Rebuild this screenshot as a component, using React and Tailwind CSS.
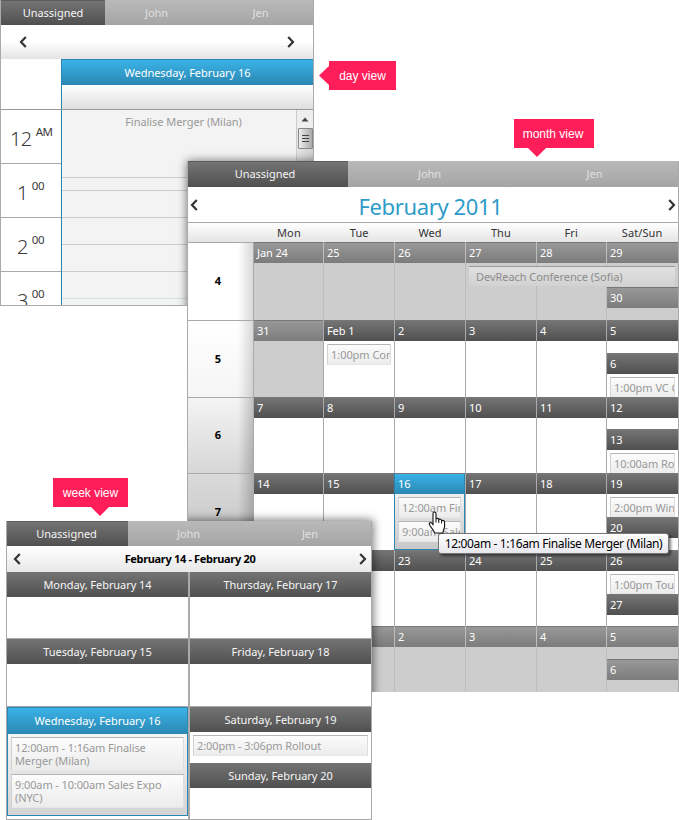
import React from "react";
import clsx from "clsx";

const DARK = "bg-linear-to-b from-[#747474] to-[#505050]";
const MUTED = "bg-linear-to-b from-[#989898] to-[#7c7c7c]";
const TODAY = "bg-linear-to-b from-[#3ab3e8] to-[#2b87b2]";
const TABS = "bg-linear-to-b from-[#b9b9b9] to-[#a5a5a5]";

function Chevron({ left }) {
  return (
    <svg width="8" height="12" viewBox="0 0 8 12" className="shrink-0">
      <path d={left ? "M6.8 0.9 L2 6 L6.8 11.1" : "M1.2 0.9 L6 6 L1.2 11.1"} fill="none" stroke="#333" strokeWidth="2.2" />
    </svg>
  );
}

function Tabs({ height, first, second }) {
  return (
    <div className={clsx("flex shrink-0 text-[11px] tracking-[-0.02px]", height, TABS)}>
      <div className={clsx("flex items-center justify-center border-t border-[#5c5c5c] text-[#f4f4f4]", first, DARK)}>Unassigned</div>
      <div className={clsx("flex items-center justify-center pt-[1px] text-[#e0e0e0]", second)}>John</div>
      <div className="flex flex-1 items-center justify-center pt-[1px] text-[#e0e0e0]">Jen</div>
    </div>
  );
}

function Event({ children, className }) {
  return (
    <div className={clsx("shrink-0 overflow-hidden border border-t-[#b5b5b5] border-r-[#dedede] border-b-[#e6e6e6] border-l-[#d2d2d2] bg-linear-to-b from-[#fcfcfc] to-[#ececec] text-[11px] text-[#999]", className)}>
      {children}
    </div>
  );
}

function Hour({ n, suffix, pad }) {
  return (
    <div className={clsx("flex h-[54px] shrink-0 border-b border-[#aaa] text-[#3c3c3c]", pad)}>
      <span className="mt-[15px] text-[20px] leading-[28px] font-light tracking-[-0.6px]">{n}</span>
      <span className="mt-[14px] ml-[4px] text-[11.5px] leading-[16px] tracking-[-0.4px]">{suffix}</span>
    </div>
  );
}

function DayView() {
  return (
    <div className="absolute top-0 left-0 flex h-[306px] w-[314px] flex-col overflow-hidden border-x border-b border-[#aaa] bg-white">
      <Tabs height="h-[25px]" first="w-[104px]" second="w-[103px]" />
      <div className="flex h-[34px] shrink-0 items-center justify-between bg-linear-to-b from-white from-50% to-[#e4e4e4] pr-[18px] pl-[18px]">
        <Chevron left />
        <Chevron />
      </div>
      <div className="flex h-[51px] shrink-0 border-b border-[#999]">
        <div className="w-[60px]" />
        <div className="flex flex-1 flex-col border-l border-[#2b87b2]">
          <div className={clsx("flex h-[26px] items-center justify-center border-t border-[#2b87b2] pt-[1px] text-[11px] tracking-[-0.05px] text-white", TODAY)}>
            Wednesday, February 16
          </div>
          <div className="flex-1 bg-linear-to-b from-white to-[#dedede]" />
        </div>
      </div>
      <div className="flex min-h-0 flex-1">
        <div className="flex w-[60px] flex-col overflow-hidden">
          <Hour n="12" suffix="AM" pad="pl-[9px]" />
          <Hour n="1" suffix="00" pad="pl-[16px]" />
          <Hour n="2" suffix="00" pad="pl-[16px]" />
          <Hour n="3" suffix="00" pad="pl-[16px]" />
        </div>
        <div className="flex flex-1 flex-col overflow-hidden border-l border-[#2b87b2] bg-[#f3f3f3]">
          <div className="h-[68px] shrink-0 border-b border-[#ccc] pt-[4px] pl-[9px] text-center text-[11px] tracking-[-0.05px] text-[#999]">Finalise Merger (Milan)</div>
          <div className="h-[13px] shrink-0 border-b border-[#ccc]" />
          <div className="h-[27px] shrink-0 border-b border-[#ccc]" />
          <div className="h-[27px] shrink-0 border-b border-[#ccc]" />
          <div className="h-[27px] shrink-0 border-b border-[#ccc]" />
          <div className="h-[27px] shrink-0 border-b border-[#d5e2e2]" />
        </div>
        <div className="flex w-[17px] flex-col items-center border-l border-[#ccc] bg-linear-to-r from-[#e6e6e6] to-[#cfcfcf]">
          <div className="flex h-[18px] w-full items-center justify-center bg-[#eee]">
            <svg width="8" height="5" viewBox="0 0 8 5"><path d="M4 0.5 L7.5 4.5 H0.5 Z" fill="#444" /></svg>
          </div>
          <div className="flex h-[21px] w-[15px] flex-col items-center justify-center gap-[2px] rounded-[1px] border border-[#888] bg-linear-to-r from-[#eee] to-[#aaa]">
            <div className="h-px w-[7px] bg-[#444]" />
            <div className="h-px w-[7px] bg-[#444]" />
            <div className="h-px w-[7px] bg-[#444]" />
          </div>
        </div>
      </div>
      <div className="absolute top-[162px] left-[187px] h-[200px] w-[200px] shadow-[0_0_9px_1px_rgba(0,0,0,0.55)]" />
    </div>
  );
}

const COLS = ["w-[70px]", "w-[71px]", "w-[71px]", "w-[71px]", "w-[70px]", "w-[72px]"];

const WEEKS = [
  { no: 4, h: "h-[78px]", days: ["Jan 24", "25", "26", "27", "28", "29"], out: [0, 1, 2, 3, 4, 5], sun: "30", gap: "h-[24px]", bg: "bg-white", edge: "to-black/15" },
  { no: 5, h: "h-[77px]", days: ["31", "Feb 1", "2", "3", "4", "5"], out: [0], sun: "6", gap: "h-[12px]", tue: "1:00pm Con", sunEv: "1:00pm VC C", bg: "bg-linear-to-b from-white to-[#f5f5f5]", edge: "to-black/15" },
  { no: 6, h: "h-[76px]", days: ["7", "8", "9", "10", "11", "12"], out: [], sun: "13", gap: "h-[11px]", sunEv: "10:00am Ro", bg: "bg-linear-to-b from-[#f4f4f4] to-[#d6d6d6]", edge: "to-black/20" },
  { no: 7, h: "h-[77px]", days: ["14", "15", "16", "17", "18", "19"], out: [], sun: "20", gap: "h-[23px]", satEv: "2:00pm Win", bg: "bg-linear-to-b from-[#dadada] to-[#c4c4c4]", edge: "to-black/20" },
  { no: 8, h: "h-[76px]", days: ["21", "22", "23", "24", "25", "26"], out: [], sun: "27", gap: "h-[23px]", satEv: "1:00pm Tou", bg: "bg-[#c4c4c4]", edge: "to-black/20" },
  { no: 9, h: "h-[66px]", days: ["28", "1", "2", "3", "4", "5"], out: [0, 1, 2, 3, 4, 5], sun: "6", gap: "h-[12px]", bg: "bg-[#c4c4c4]", edge: "to-black/20" },
];

function DayHeader({ children, tone }) {
  return (
    <div className={clsx("h-[21px] shrink-0 border-t border-[#777] pl-[3px] text-[11px] leading-[20px] tracking-[-0.1px] text-white", tone)}>{children}</div>
  );
}

const EV = "mx-[3px] mt-[3px] h-[21px] pl-[3px] leading-[20px] whitespace-nowrap tracking-[-0.05px]";

function Cell({ week, i }) {
  const out = week.out.includes(i);
  const today = week.no === 7 && i === 2;
  const tone = out ? MUTED : today ? TODAY : DARK;
  return (
    <div className={clsx("flex shrink-0 flex-col overflow-hidden border-l", COLS[i], today ? "border-r border-b border-[#2b87b2]" : out && i > 0 ? "border-[#bebebe]" : "border-[#aaa]", out ? "bg-[#cdcdcd]" : today ? "bg-linear-to-b from-white to-[#c8c8c8]" : "bg-white")}>
      <DayHeader tone={tone}>{week.days[i]}</DayHeader>
      {i === 1 && week.tue && <Event className={EV}>{week.tue}</Event>}
      {today && <Event className={EV}>12:00am Fin</Event>}
      {today && <Event className={EV}>9:00am Sale</Event>}
      {i === 5 && (
        <>
          <div className={clsx("flex shrink-0 flex-col pt-[3px]", week.gap)}>
            {week.satEv && <Event className="mx-[3px] h-[20px] pl-[3px] leading-[20px] tracking-[-0.05px] whitespace-nowrap">{week.satEv}</Event>}
          </div>
          <DayHeader tone={tone}>{week.sun}</DayHeader>
          {week.sunEv && <Event className={EV}>{week.sunEv}</Event>}
        </>
      )}
    </div>
  );
}

function MonthView() {
  return (
    <div className="absolute top-[161px] left-[187px] flex h-[531px] w-[492px] flex-col overflow-hidden border-x border-[#aaa] bg-white">
      <Tabs height="h-[26px]" first="w-[160px] pr-[6px]" second="w-[163px]" />
      <div className="flex h-[35px] shrink-0 items-center justify-between pr-[2px] pl-[2px]">
        <Chevron left />
        <span className="mt-[3px] -ml-[5px] text-[22px] leading-[30px] tracking-[-0.36px] text-[#2d9bc8]">February 2011</span>
        <Chevron />
      </div>
      <div className="flex h-[20px] shrink-0 border-t border-[#aaa] bg-linear-to-b from-white to-[#e4e4e4] pl-[66px] text-center text-[11px] leading-[20px] tracking-[0.1px] text-[#333]">
        {["Mon", "Tue", "Wed", "Thu", "Fri", "Sat/Sun"].map((d, i) => (
          <div key={d} className={COLS[i]}>{d}</div>
        ))}
      </div>
      {WEEKS.map((w) => (
        <div key={w.no} className={clsx("flex shrink-0", w.h)}>
          <div className={clsx("flex w-[65px] shrink-0 border-t border-[#aaa]", w.bg)}>
            <div className="flex w-[50px] items-center justify-center pl-[10px] text-[11px] font-bold text-black">{w.no}</div>
            <div className={clsx("flex-1 bg-linear-to-r from-transparent", w.edge)} />
          </div>
          {w.days.map((d, i) => <Cell key={i} week={w} i={i} />)}
        </div>
      ))}
      <div className="absolute top-[105px] left-[281px] h-[20px] w-[206px] border-t border-[#999] bg-linear-to-b from-[#e0e0e0] to-[#d2d2d2] pl-[7px] text-[11px] leading-[20px] tracking-[-0.05px] text-[#8c8c8c]">
        DevReach Conference (Sofia)
      </div>
      <div className="absolute top-[360px] -left-[182px] h-[300px] w-[366px] shadow-[0_0_9px_1px_rgba(0,0,0,0.55)]" />
    </div>
  );
}

function WeekDay({ title, h, children }) {
  return (
    <div className={clsx("shrink-0", h)}>
      <div className={clsx("flex h-[25px] items-center justify-center pt-[1px] text-[11px] tracking-[-0.05px] text-[#f6f6f6]", DARK)}>{title}</div>
      {children}
    </div>
  );
}

function WeekView() {
  return (
    <div className="absolute top-[521px] left-[6px] flex h-[299px] w-[366px] flex-col border-x border-b border-[#aaa] bg-white">
      <Tabs height="h-[25px]" first="w-[121px] pr-[2px]" second="w-[121px]" />
      <div className="flex h-[26px] shrink-0 items-center justify-between bg-linear-to-b from-white to-[#e8e8e8] pr-[4px] pl-[6px]">
        <Chevron left />
        <span className="text-[11px] font-bold tracking-[-0.33px] text-black">February 14 - February 20</span>
        <Chevron />
      </div>
      <div className="flex flex-1">
        <div className="flex w-[181px] flex-col">
          <WeekDay title="Monday, February 14" h="h-[67px] border-b border-[#aaa]" />
          <WeekDay title="Tuesday, February 15" h="h-[68px] border-b border-[#aaa]" />
          <div className="flex h-[109px] flex-col border border-[#2b87b2] bg-linear-to-b from-white to-[#d4d4d4]">
            <div className={clsx("flex h-[26px] shrink-0 items-center justify-center text-[11px] tracking-[-0.05px] text-white", TODAY)}>Wednesday, February 16</div>
            <Event className="mx-[3px] mt-[3px] h-[34px] pt-[3px] pl-[3px] leading-[13px] tracking-[-0.12px]">12:00am - 1:16am Finalise Merger (Milan)</Event>
            <Event className="mx-[3px] mt-[3px] h-[34px] pt-[3px] pl-[3px] leading-[13px] tracking-[-0.12px]">9:00am - 10:00am Sales Expo (NYC)</Event>
          </div>
        </div>
        <div className="w-[2px] bg-[#aaa]" />
        <div className="flex flex-1 flex-col">
          <WeekDay title="Thursday, February 17" h="h-[67px] border-b border-[#aaa]" />
          <WeekDay title="Friday, February 18" h="h-[68px] border-b border-[#aaa]" />
          <WeekDay title="Saturday, February 19" h="h-[56px]">
            <Event className="mx-[3px] mt-[3px] h-[21px] pl-[3px] leading-[20px] tracking-[-0.1px]">2:00pm - 3:06pm Rollout</Event>
          </WeekDay>
          <WeekDay title="Sunday, February 20" h="h-[56px]" />
        </div>
      </div>
    </div>
  );
}

function Tag({ children, box, arrow, path, w, h }) {
  return (
    <div className={clsx("absolute flex h-[29px] items-center justify-center bg-[#ff1e5a] font-['Liberation_Sans',Arial,sans-serif] text-[12px] text-white", box)}>
      {children}
      <svg className={clsx("absolute", arrow)} width={w} height={h}><path d={path} fill="#ff1e5a" /></svg>
    </div>
  );
}

export default function App() {
  return (
    <div className="relative h-[820px] w-[679px] overflow-hidden bg-white font-['Noto_Sans','Open_Sans',sans-serif]">
      <DayView />
      <MonthView />
      <WeekView />
      <Tag box="left-[329px] top-[61px] w-[67px]" arrow="-left-[10px] top-[5px]" w="10" h="19" path="M10 0 L0 9.5 L10 19 Z">day view</Tag>
      <Tag box="left-[514px] top-[119px] w-[80px] pr-[2px]" arrow="left-[14px] top-[29px]" w="18" h="9" path="M0 0 H18 L9 9 Z">month view</Tag>
      <Tag box="left-[53px] top-[478px] w-[75px]" arrow="left-[38px] top-[29px]" w="18" h="9" path="M0 0 H18 L9 9 Z">week view</Tag>
      <div className="absolute top-[533px] left-[438px] flex h-[21px] w-[231px] items-center justify-center rounded-[3px] border border-[#777] bg-linear-to-b from-white to-[#e6e6ee] text-[12px] tracking-[-0.36px] whitespace-nowrap text-black shadow-[2px_2px_3px_rgba(0,0,0,0.5)]">
        12:00am - 1:16am Finalise Merger (Milan)
      </div>
      <svg className="absolute top-[511px] left-[428px]" width="19" height="23" viewBox="0 0 19 23">
        <path d="M6.5 1 C7.5 1 8 1.7 8 2.5 V8 C8.5 7 10.6 7.2 10.8 8.6 C11.6 7.8 13.4 8.2 13.6 9.6 C14.6 9 16.6 9.6 16.6 11.2 V15 C16.6 17.5 15 18.5 15 22 H6.5 C6.5 19.5 3 17 1.4 13.6 C0.6 12 2.6 10.8 3.8 12.2 L5 13.6 V2.5 C5 1.7 5.5 1 6.5 1 Z" fill="#fff" stroke="#111" strokeWidth="1.1" />
        <path d="M8 8 V11.5 M10.8 9 V12 M13.6 10 V12.5" stroke="#111" strokeWidth="1" />
      </svg>
    </div>
  );
}
